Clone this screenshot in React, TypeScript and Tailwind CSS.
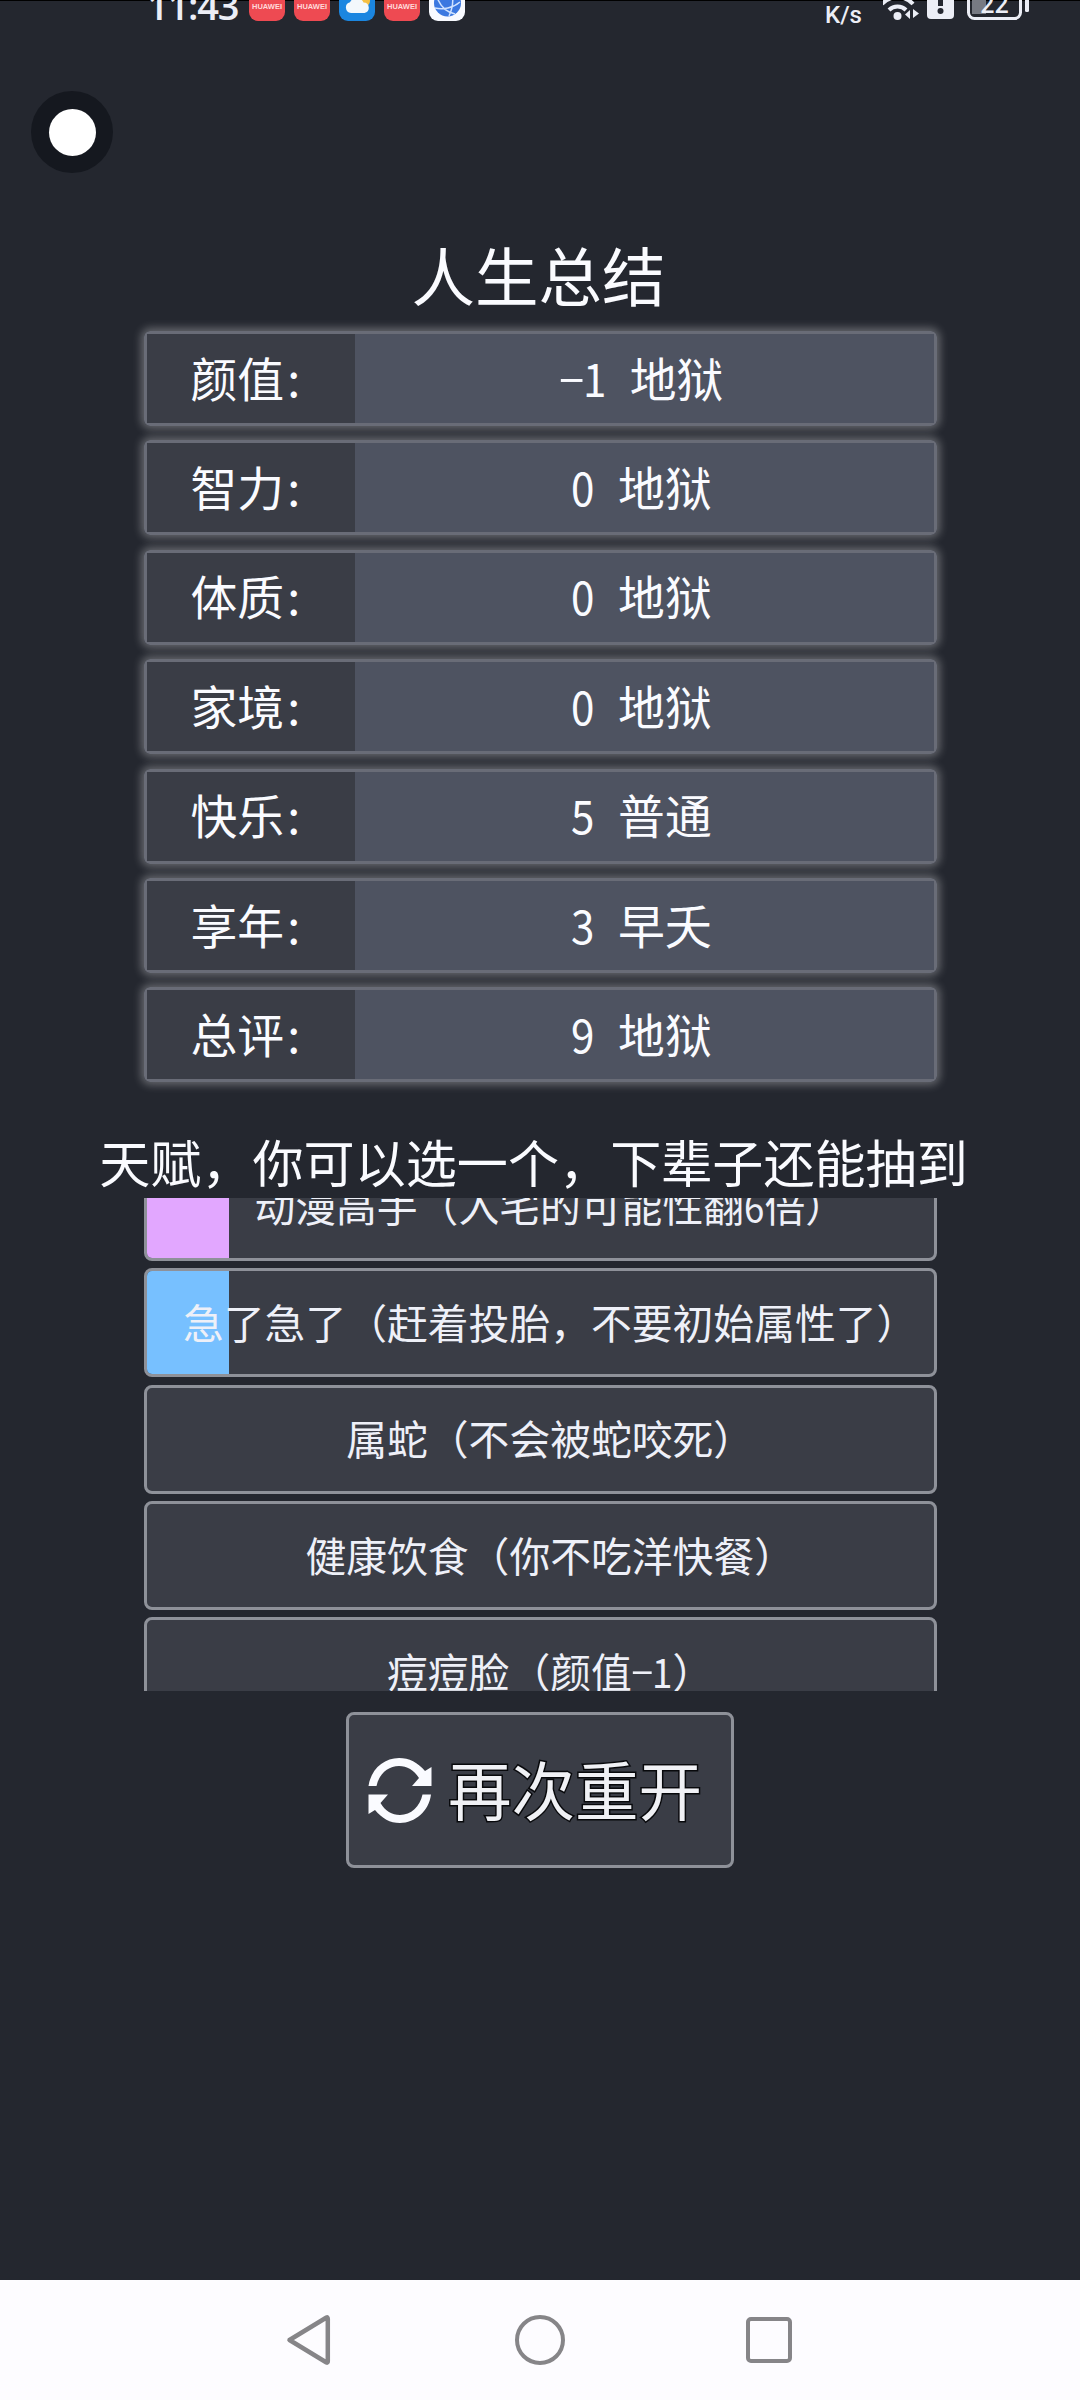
import { Fragment } from 'react';
import clsx from 'clsx';

interface Stat {
  label: string;
  value: string;
}

interface Talent {
  text: string;
  grade?: 'purple' | 'blue';
}

const stats: Stat[] = [
  { label: '颜值:', value: '-1 地狱' },
  { label: '智力:', value: '0 地狱' },
  { label: '体质:', value: '0 地狱' },
  { label: '家境:', value: '0 地狱' },
  { label: '快乐:', value: '5 普通' },
  { label: '享年:', value: '3 早夭' },
  { label: '总评:', value: '9 地狱' },
];

const talents: Talent[] = [
  { text: '动漫高手（入宅的可能性翻6倍）', grade: 'purple' },
  { text: '急了急了（赶着投胎，不要初始属性了）', grade: 'blue' },
  { text: '属蛇（不会被蛇咬死）' },
  { text: '健康饮食（你不吃洋快餐）' },
  { text: '痘痘脸（颜值-1）' },
];

// ASCII characters take exactly half an em, like in a fixed-width CJK face
function MonoText({ children }: { children: string }) {
  return (
    <span className="whitespace-pre">
      {children.split(/([\x20-\x7e])/).map((part, i) =>
        /^[\x20-\x7e]$/.test(part) ? (
          <span
            key={i}
            className={clsx(
              'inline-flex w-[0.5em] justify-center',
              part === '-' && '-translate-y-[3px] scale-x-[1.8] scale-y-90',
              part === ':' && '-translate-x-[2px]',
              /\d/.test(part) && 'scale-x-90'
            )}
          >
            {part}
          </span>
        ) : (
          <Fragment key={i}>{part}</Fragment>
        )
      )}
    </span>
  );
}

function HuaweiIcon() {
  return (
    <div className="flex h-9 w-9 items-center justify-center rounded-[9px] bg-[#ee4a52] pt-[7px] text-[7.5px] leading-none font-bold text-[#ffd9d9]">
      HUAWEI
    </div>
  );
}

function WeatherIcon() {
  return (
    <svg className="h-9 w-9" viewBox="0 0 36 36">
      <rect width="36" height="36" rx="9" fill="#1b86e0" />
      <circle cx="24.500" cy="16" r="6.500" fill="#f5c044" />
      <path d="M12 28a5.500 5.500 0 0 1-1-10.800a7.500 7.500 0 0 1 13.500 0.300a5.300 5.300 0 0 1 1 10.500z" fill="#f3f8fc" />
    </svg>
  );
}

function BrowserIcon() {
  return (
    <svg className="h-9 w-9" viewBox="0 0 36 36">
      <rect width="36" height="36" rx="9" fill="#f8faff" />
      <circle cx="18.500" cy="18" r="13.500" fill="#3b78e0" />
      <path d="M8 12c3 9 9 15 18 17M20 31c3-6 5-14 3-25M6 23c8 2 18 0 25-6" fill="none" stroke="#cfe2ff" strokeWidth="1.500" />
    </svg>
  );
}

function StatusBar() {
  return (
    <div className="flex h-[21px] shrink-0 items-end border-t border-black pl-[147px] text-[#eceef6]">
      <div className="flex w-[102px] shrink-0 items-end">
        <span className="-mb-[5px] font-['Open_Sans','Noto_Sans',sans-serif] text-[38px] leading-[42px] font-semibold tracking-[-1.2px]">11:43</span>
      </div>
      <div className="flex shrink-0 items-end gap-[9px] font-['Liberation_Sans',sans-serif]">
        <HuaweiIcon />
        <HuaweiIcon />
        <WeatherIcon />
        <HuaweiIcon />
        <BrowserIcon />
      </div>
      <div className="ml-[360px] -mb-[6px] flex w-[43px] shrink-0 flex-col items-start font-['Roboto',sans-serif] text-[24px] leading-[23px] font-medium">
        <span>10.2</span>
        <span>K/s</span>
      </div>
      <svg className="ml-[15px] h-[30px] w-[38px] shrink-0" viewBox="0 0 38 30">
        <g fill="none" stroke="currentColor" strokeWidth="4">
          <path d="M-1 13a21 21 0 0 1 31 0" />
          <path d="M6 19a12 12 0 0 1 17 0" />
        </g>
        <circle cx="14.500" cy="25" r="4" fill="currentColor" />
        <path d="M27 19v9l-5-4.500zM30 18l6 4.500l-6 4.500z" fill="currentColor" />
      </svg>
      <svg className="mb-[2px] ml-[6px] h-8 w-[27px] shrink-0" viewBox="0 0 27 32">
        <rect width="27" height="32" rx="4" fill="currentColor" />
        <path d="M13.500 7v12" stroke="#252831" strokeWidth="5" />
        <circle cx="13.500" cy="24" r="3" fill="#252831" />
      </svg>
      <svg className="mb-px ml-[13px] h-8 w-[64px] shrink-0" viewBox="0 0 64 32">
        <rect x="5" y="4" width="14" height="22" fill="#777a83" />
        <rect x="1.500" y="1.500" width="52" height="29" rx="6" fill="none" stroke="currentColor" strokeWidth="3" />
        <rect x="58" y="8" width="4" height="16" rx="1.500" fill="currentColor" />
        <text x="27.500" y="24.500" textAnchor="middle" fontFamily="Roboto, sans-serif" fontSize="25" fontWeight="500" fill="currentColor">
          22
        </text>
      </svg>
    </div>
  );
}

function StatRow({ label, value }: Stat) {
  return (
    <div className="flex h-[95px] shrink-0 rounded-[6px] border-3 border-[#696c77] text-[46.8px] leading-none shadow-[0_0_9px_3px_rgba(255,255,255,0.3)]">
      <div className="flex w-[208px] shrink-0 items-center justify-center bg-[#3a3d46] pr-[3px] pb-[3px]">
        <MonoText>{label}</MonoText>
      </div>
      <div className="flex flex-1 items-center justify-center bg-[#4e5361] pr-[5px] pb-[3px]">
        <MonoText>{value}</MonoText>
      </div>
    </div>
  );
}

function TalentItem({ text, grade }: Talent) {
  return (
    <div className="relative flex h-[109px] shrink-0 items-center justify-center overflow-hidden rounded-lg border-3 border-[#8e9199] bg-[#3a3d46] pb-px text-[40.8px] leading-none text-[#eef0f8]">
      {grade && (
        <div
          className={clsx(
            'absolute inset-y-0 left-0 w-[82px]',
            grade === 'purple' ? 'bg-[#e2a7ff]' : 'bg-[#77c0ff]'
          )}
        />
      )}
      <span className="relative -mr-[0.5em]">
        <MonoText>{text}</MonoText>
      </span>
    </div>
  );
}

function RestartIcon() {
  return (
    <svg className="h-[65px] w-[64px] shrink-0" viewBox="0 0 64 65" fill="#fafbff">
      <path d="M0.500 28C3 11 16 0 31 0C41 0 50 4.500 57 13L63.500 9V28H44L51 20C46 12 39 8 31 8C20 8 11 16 8.500 28Z" />
      <path d="M63 36.500C61 53 47 65 32 65C22 65 14 60.500 7 52L0.500 56V36.500H20L12.500 45C17 53 24 57 32 57C43 57 52 48.500 54.500 36.500Z" />
    </svg>
  );
}

function NavBar() {
  return (
    <div className="flex h-[120px] shrink-0 items-center bg-[#fdfcff] pl-[286px] text-[#868588]">
      <svg className="h-[52px] w-[45px]" viewBox="0 0 45 52" fill="none" stroke="currentColor" strokeWidth="4.500" strokeLinejoin="round">
        <path d="M3.500 26L40.500 3.500Q41.800 3 41.800 5V47Q41.800 49 40.500 48.500Z" />
      </svg>
      <div className="ml-[184px] h-[50px] w-[50px] rounded-full border-4 border-current" />
      <div className="ml-[181px] h-[46px] w-[46px] rounded-[5px] border-4 border-current" />
    </div>
  );
}

export default function App() {
  return (
    <div className="relative flex h-[2400px] w-[1080px] flex-col overflow-hidden bg-[#24272f] font-['Noto_Sans_CJK_SC',sans-serif] text-[#fafbff]">
      <StatusBar />

      {/* Floating assistive button */}
      <div className="absolute top-[91px] left-[31px] flex h-[82px] w-[82px] items-center justify-center rounded-full bg-[#15181f]">
        <div className="h-[47px] w-[47px] rounded-full bg-white" />
      </div>

      <main className="flex flex-1 flex-col items-center pt-[221px]">
        <h1 className="mr-[3px] h-[89px] text-[63.500px] leading-[62px]">人生总结</h1>

        <div className="flex w-[793px] flex-col gap-[14.4px]">
          {stats.map((stat) => (
            <StatRow key={stat.label} {...stat} />
          ))}
        </div>

        <h2 className="mt-[46px] mr-[13px] h-[70px] text-[51.1px] leading-[66px] whitespace-nowrap">
          天赋，你可以选一个，下辈子还能抽到
        </h2>

        {/* Talent list, scrolled part of the way down */}
        <div className="h-[493px] w-[793px] overflow-hidden">
          <div className="-mt-[46.500px] flex flex-col gap-[7.400px]">
            {talents.map((talent) => (
              <TalentItem key={talent.text} {...talent} />
            ))}
          </div>
        </div>

        <button className="mt-[21px] flex h-[156px] w-[388px] items-center rounded-lg border-3 border-[#8e9199] bg-[#3a3d46] pl-[19px]">
          <RestartIcon />
          <span className="mb-[6px] ml-[16px] text-[63.500px] leading-none whitespace-nowrap text-[#f0f1f5] [-webkit-text-stroke:3px_#08090c] [paint-order:stroke_fill]">
            再次重开
          </span>
        </button>
      </main>

      <NavBar />
    </div>
  );
}
